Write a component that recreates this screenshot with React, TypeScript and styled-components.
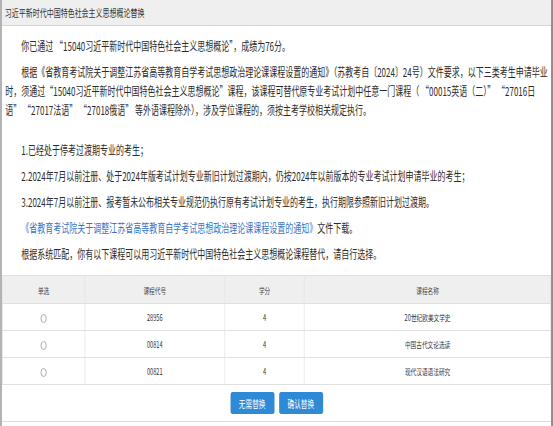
import React, {useState} from 'react';
import styled, {createGlobalStyle} from 'styled-components';

// the reference is a ~830px wide page squeezed horizontally into 553px
const Global_Style = createGlobalStyle`
  html, body {
    margin: 0;
    padding: 0;
    background: #fff;
    overflow: hidden;
  }
`;

const Page = styled.div`
  width: 830px;
  height: 426px;
  transform: scaleX(0.6663);
  transform-origin: 0 0;
  font-family: 'Noto Sans CJK SC', 'Microsoft YaHei', sans-serif;
  color: #2b2b2b;
`;

const Dialog = styled.div`
  box-sizing: border-box;
  height: 426px;
  border-left: 3px solid #b3b3b3;
  border-right: 3px solid #8e8e8e;
  background: #fff;
`;

const Title_Bar = styled.div`
  height: 25px;
  line-height: 25px;
  padding-left: 4px;
  background: #efefef;
  border-bottom: 1px solid #d5d5d5;
  font-size: 10.5px;
  color: #333;
`;

const Content = styled.div`
  display: flex;
  flex-direction: column;
  padding: 10px 2px 0 5px;
  font-size: 12px;
  line-height: 19px;
  white-space: nowrap;
`;

const Para = styled.p<{$top?: number; $bottom?: number}>`
  margin: ${(p) => p.$top ?? 0}px 0 ${(p) => p.$bottom ?? 7}px;
  text-indent: 2em;
`;

const Doc_Link = styled.a`
  color: #3a74c4;
  text-decoration: none;
`;

const Table = styled.table`
  width: 100%;
  border-collapse: collapse;
  table-layout: fixed;
  font-size: 8.5px;
`;

const Head_Cell = styled.th<{$w: string}>`
  width: ${(p) => p.$w};
  height: 27px;
  padding: 0;
  background: #efefef;
  border: 1px solid #e0e0e0;
  font-weight: normal;
  color: #444;
  text-align: center;
`;

const Cell = styled.td`
  height: 26px;
  padding: 0;
  border: 1px solid #e0e0e0;
  color: #333;
  text-align: center;
`;

const Radio = styled.input.attrs({type: 'radio'})`
  appearance: none;
  display: inline-block;
  box-sizing: border-box;
  width: 9px;
  height: 9px;
  margin: 0;
  border: 1px solid #9a9a9a;
  border-radius: 50%;
  background: #fff;
  vertical-align: middle;
  &:checked {
    box-shadow: inset 0 0 0 2px #fff;
    background: #2f8ad6;
  }
`;

const Footer = styled.div`
  display: flex;
  justify-content: center;
  gap: 7px;
  padding: 7px 0;
  border-bottom: 1px solid #dcdcdc;
`;

const Button = styled.button`
  width: 66px;
  height: 22px;
  padding: 0;
  border: none;
  border-radius: 3px;
  background: #2f8ad6;
  color: #fff;
  font-family: inherit;
  font-size: 10px;
  cursor: pointer;
`;

const columns = [
  {label: '单选', w: '15%'},
  {label: '课程代号', w: '25.5%'},
  {label: '学分', w: '14.5%'},
  {label: '课程名称', w: '45%'},
];

const courses = [
  {code: '28956', credit: 4, name: '20世纪欧美文学史'},
  {code: '00814', credit: 4, name: '中国古代文论选读'},
  {code: '00821', credit: 4, name: '现代汉语语法研究'},
];

export default function App() {
  const [picked, setPicked] = useState<string | null>(null);

  return (
    <>
      <Global_Style />
      <Page>
        <Dialog>
          <Title_Bar>习近平新时代中国特色社会主义思想概论替换</Title_Bar>
          <Content>
            <Para>
              你已通过 “15040习近平新时代中国特色社会主义思想概论”，成绩为76分。
            </Para>
            <Para>
              根据《省教育考试院关于调整江苏省高等教育自学考试思想政治理论课课程设置的通知》（苏教考自〔2024〕24号）文件要求，以下三类考生申请毕业
              <br />
              时，须通过“15040习近平新时代中国特色社会主义思想概论”课程，该课程可替代原专业考试计划中任意一门课程（ “00015英语（二）” “27016日
              <br />
              语” “27017法语” “27018俄语” 等外语课程除外），涉及学位课程的，须按主考学校相关规定执行。
            </Para>
            <Para $top={14}>1.已经处于停考过渡期专业的考生；</Para>
            <Para>
              2.2024年7月以前注册、处于2024年版考试计划专业新旧计划过渡期内，仍按2024年以前版本的专业考试计划申请毕业的考生；
            </Para>
            <Para>
              3.2024年7月以前注册、报考暂未公布相关专业规范仍执行原有考试计划专业的考生，执行期限参照新旧计划过渡期。
            </Para>
            <Para>
              <Doc_Link href='#'>
                《省教育考试院关于调整江苏省高等教育自学考试思想政治理论课课程设置的通知》
              </Doc_Link>
              文件下载。
            </Para>
            <Para $bottom={12}>
              根据系统匹配，你有以下课程可以用习近平新时代中国特色社会主义思想概论课程替代，请自行选择。
            </Para>
          </Content>
          <Table>
            <thead>
              <tr>
                {columns.map((c) => (
                  <Head_Cell key={c.label} $w={c.w}>
                    {c.label}
                  </Head_Cell>
                ))}
              </tr>
            </thead>
            <tbody>
              {courses.map((c) => (
                <tr key={c.code}>
                  <Cell>
                    <Radio
                      name='course'
                      checked={picked === c.code}
                      onChange={() => setPicked(c.code)}
                    />
                  </Cell>
                  <Cell>{c.code}</Cell>
                  <Cell>{c.credit}</Cell>
                  <Cell>{c.name}</Cell>
                </tr>
              ))}
            </tbody>
          </Table>
          <Footer>
            <Button>无需替换</Button>
            <Button>确认替换</Button>
          </Footer>
        </Dialog>
      </Page>
    </>
  );
}
